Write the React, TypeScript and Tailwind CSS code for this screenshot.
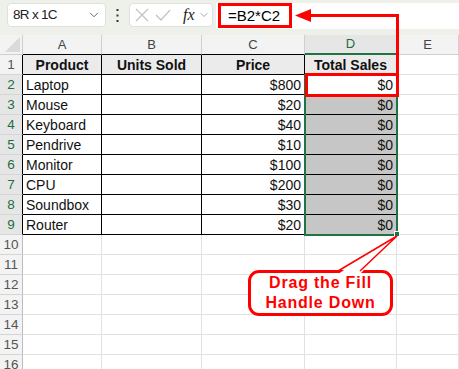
import { ChevronDown } from "lucide-react";

const rows = [
  ["Laptop", "$800"],
  ["Mouse", "$20"],
  ["Keyboard", "$40"],
  ["Pendrive", "$10"],
  ["Monitor", "$100"],
  ["CPU", "$200"],
  ["Soundbox", "$30"],
  ["Router", "$20"],
];

const letters = ["A", "B", "C", "D", "E"];

function Toolbar() {
  return (
    <div className="h-[35px] bg-[#eef1ea] flex items-start pt-[3px] pl-[7px]">
      <div className="w-[99px] h-[24px] bg-white rounded-[4px] border border-[#dfe2dc] flex items-center justify-between pl-[5px] pr-[4px] text-[13.5px] text-[#222]">
        <span className="tracking-[-0.7px]">8R x 1C</span>
        <ChevronDown size={14} strokeWidth={1.5} className="text-[#555]" />
      </div>
      <div className="w-[23px] h-[24px] flex items-center justify-center">
        <svg width="3" height="13" viewBox="0 0 3 13">
          <rect x="0.5" y="0" width="2" height="2" fill="#333" />
          <rect x="0.5" y="5.5" width="2" height="2" fill="#333" />
          <rect x="0.5" y="11" width="2" height="2" fill="#333" />
        </svg>
      </div>
      <div className="w-[84px] h-[24px] bg-white rounded-[4px] border border-[#dfe2dc] flex items-center pl-[5px] gap-[6px]">
        <svg width="14" height="14" viewBox="0 0 14 14">
          <path d="M1 1 L13 13 M13 1 L1 13" stroke="#c4c4c4" strokeWidth="1.3" />
        </svg>
        <svg width="16" height="14" viewBox="0 0 16 14">
          <path d="M1 7 L6 12 L15 2" stroke="#c4c4c4" strokeWidth="1.3" fill="none" />
        </svg>
        <span className="ml-[6px] text-[16px] italic text-[#222] leading-none" style={{ fontFamily: "'Liberation Serif', serif" }}>
          fx
        </span>
        <ChevronDown size={12} strokeWidth={1.5} className="text-[#888] -ml-[3px]" />
      </div>
      <div className="ml-[3px] flex-1 h-[26px] bg-white flex items-center pl-[12px] text-[15px] text-black">
        =B2*C2
      </div>
    </div>
  );
}

function Grid() {
  const cells = [];
  cells.push(
    <div key="corner" className="h-[20px] bg-[#f3f3f3] border-r border-b border-[#cfcfcf] relative">
      <svg width="15" height="15" className="absolute right-[2px] bottom-[2px]" viewBox="0 0 15 15">
        <polygon points="15,0 15,15 0,15" fill="#dadada" />
      </svg>
    </div>
  );
  letters.forEach((l, i) => {
    const sel = l === "D";
    cells.push(
      <div
        key={"h" + l}
        className={`h-[20px] flex items-center justify-center text-[13px] border-r ${
          sel
            ? "bg-[#e6e6e6] text-[#1e6c41] border-b-2 border-b-[#217346] border-r-[#cfcfcf]"
            : i < 4
            ? "bg-[#f3f3f3] text-[#444] border-b border-b-black border-r-[#cfcfcf]"
            : "bg-[#f3f3f3] text-[#444] border-b border-[#cfcfcf]"
        }`}
      >
        {l}
      </div>
    );
  });

  for (let r = 1; r <= 16; r++) {
    const inTable = r <= 9;
    const selRow = r >= 2 && r <= 9;
    cells.push(
      <div
        key={"r" + r}
        className={`h-[20px] flex items-center justify-center pt-[2px] text-[13.5px] border-b border-[#d6d6d6] border-r ${
          inTable ? "border-r-black" : "border-r-[#bdbdbd]"
        } ${selRow ? "bg-[#e6e6e6] text-[#1e6c41]" : "bg-[#f3f3f3] text-[#555]"}`}
      >
        {r}
      </div>
    );
    for (let c = 0; c < 5; c++) {
      let content = "";
      let bold = false;
      let right = false;
      if (r === 1 && c < 4) {
        content = ["Product", "Units Sold", "Price", "Total Sales"][c];
        bold = true;
      } else if (inTable) {
        const d = rows[r - 2];
        if (c === 0) content = d[0];
        if (c === 2) {
          content = d[1];
          right = true;
        }
        if (c === 3) {
          content = "$0";
          right = true;
        }
      }
      const dataCell = inTable && c < 4;
      const bg = r === 1 && c < 4 ? "bg-[#ebebeb]" : c === 3 && r >= 3 && r <= 9 ? "bg-[#c6c6c6]" : "bg-white";
      cells.push(
        <div
          key={r + "-" + c}
          className={`h-[20px] flex items-center pt-[2px] px-[3px] text-[14px] text-[#111] whitespace-nowrap overflow-hidden border-r border-b ${
            dataCell ? "border-black" : "border-[#e1e1e1]"
          } ${bg} ${bold ? "font-bold justify-center text-[13.5px]" : right ? "justify-end" : "justify-start"}`}
        >
          {content}
        </div>
      );
    }
  }

  return (
    <div className="grid grid-cols-[23px_79px_100px_103px_92px_62px]" style={{ fontFamily: "'Liberation Sans', Arial, sans-serif" }}>
      {cells}
    </div>
  );
}

export default function App() {
  return (
    <div className="relative w-[459px] h-[369px] overflow-hidden bg-white" style={{ fontFamily: "'Liberation Sans', Arial, sans-serif" }}>
      <Toolbar />
      <Grid />

      {/* selection */}
      <div className="absolute left-[304px] top-[74px] w-[94px] h-[162px] border-2 border-[#217346]" />
      <div className="absolute left-[394px] top-[231px] w-[6px] h-[6px] bg-[#217346] border border-white" />

      {/* callout */}
      <div className="absolute left-[248px] top-[270px] w-[145px] h-[46px] bg-white border-[3px] border-[#ff0000] rounded-[11px] flex flex-col items-center justify-center text-[#ff0000] font-bold text-[16px] leading-[20px] tracking-[0.8px]">
        <span>Drag the Fill</span>
        <span>Handle Down</span>
      </div>

      <svg className="absolute left-0 top-0 pointer-events-none" width="459" height="369">
        <rect x="219.5" y="4.5" width="71" height="22" fill="none" stroke="#ff0000" strokeWidth="3" />
        <line x1="308" y1="15.5" x2="398" y2="15.5" stroke="#ff0000" strokeWidth="3" />
        <polygon points="295,15.5 311,9 311,22" fill="#ff0000" />
        <line x1="397.5" y1="14" x2="397.5" y2="74" stroke="#ff0000" strokeWidth="3" />
        <rect x="306.5" y="74.5" width="91" height="21" fill="none" stroke="#ff0000" strokeWidth="3" />
        <polygon points="338,274 397,236 360,274" fill="white" />
        <polyline points="338,271 397,236 360,271" fill="none" stroke="#ff0000" strokeWidth="1.5" />
      </svg>
    </div>
  );
}
